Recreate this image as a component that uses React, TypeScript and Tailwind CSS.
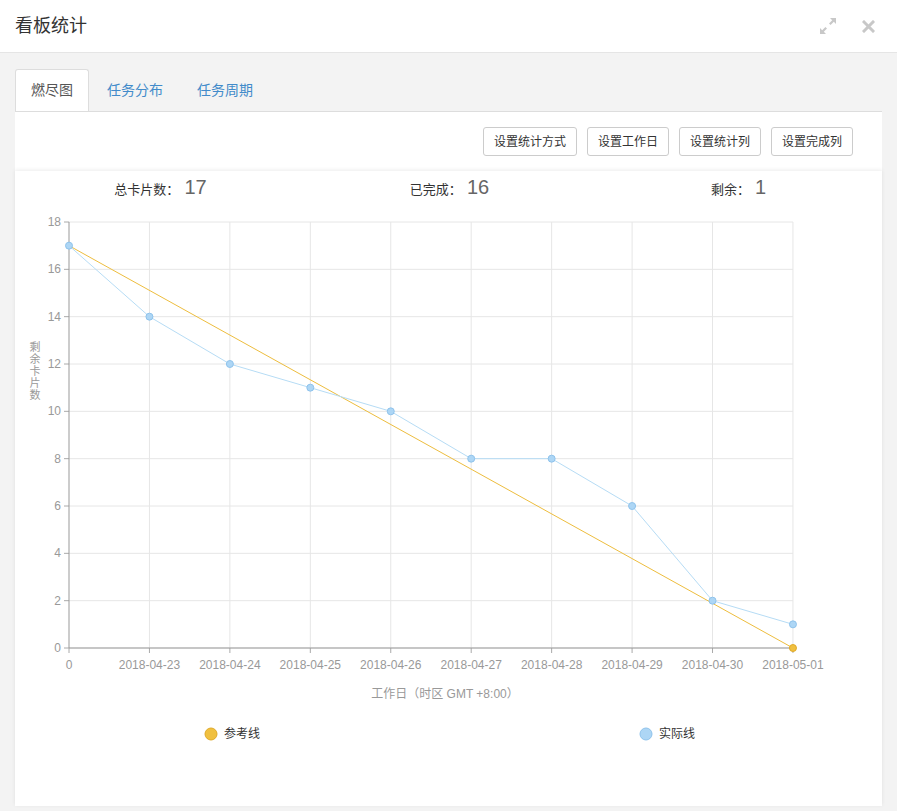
import React from 'react';

const actual = [17, 14, 12, 11, 10, 8, 8, 6, 2, 1];
const dates = ['0', '2018-04-23', '2018-04-24', '2018-04-25', '2018-04-26', '2018-04-27', '2018-04-28', '2018-04-29', '2018-04-30', '2018-05-01'];
const yTicks = [0, 2, 4, 6, 8, 10, 12, 14, 16, 18];

const X0 = 54;
const STEP = 80.44;
const Y0 = 19;

const px = (i: number) => X0 + i * STEP;
// one unit of value = 23.667px (two units per grid row of 47.33px)
const y = (v: number) => Y0 + (18 - v) * 23.667;

function BurnChart() {
  const right = px(9);
  const bottom = y(0);
  const actualPts = actual.map((v, i) => `${px(i)},${y(v)}`).join(' ');
  return (
    <svg width={868} height={603} className="block" style={{ fontFamily: '"Liberation Sans", "Noto Sans CJK SC", sans-serif' }}>
      {/* grid */}
      {yTicks.map((t) => (
        <g key={t}>
          <line x1={X0} x2={right} y1={y(t)} y2={y(t)} stroke="#e6e6e6" strokeWidth={1} />
          <line x1={X0 - 5} x2={X0} y1={y(t)} y2={y(t)} stroke="#aaa" strokeWidth={1} />
          <text x={X0 - 8} y={y(t) + 4} textAnchor="end" fontSize={12} fill="#999">{t}</text>
        </g>
      ))}
      {dates.map((d, i) => (
        <g key={d}>
          {i > 0 && <line x1={px(i)} x2={px(i)} y1={y(18)} y2={bottom} stroke="#e6e6e6" strokeWidth={1} />}
          <line x1={px(i)} x2={px(i)} y1={bottom} y2={bottom + 5} stroke="#aaa" strokeWidth={1} />
          <text x={px(i)} y={bottom + 21} textAnchor="middle" fontSize={12} fill="#999">{d}</text>
        </g>
      ))}
      {/* axes */}
      <line x1={X0} x2={X0} y1={y(18)} y2={bottom} stroke="#999" strokeWidth={1} />
      <line x1={X0} x2={right} y1={bottom} y2={bottom} stroke="#999" strokeWidth={1} />

      {/* reference line */}
      <line x1={px(0)} y1={y(17)} x2={px(9)} y2={y(0)} stroke="#edbd3e" strokeWidth={1} />
      <circle cx={px(9)} cy={y(0)} r={3.5} fill="#f0c040" stroke="#e0aa28" strokeWidth={1} />

      {/* actual line */}
      <polyline points={actualPts} fill="none" stroke="#b6dcf5" strokeWidth={1} />
      {actual.map((v, i) => (
        <circle key={i} cx={px(i)} cy={y(v)} r={3.5} fill="#add6f5" stroke="#8fc3ec" strokeWidth={1} />
      ))}

      {/* axis titles */}
      <text x={430} y={495} textAnchor="middle" fontSize={12} fill="#999">工作日（时区 GMT +8:00）</text>
      {['剩', '余', '卡', '片', '数'].map((c, i) => (
        <text key={c} x={20} y={148 + i * 12} textAnchor="middle" fontSize={11} fill="#999">{c}</text>
      ))}

      {/* legend */}
      <circle cx={196} cy={531} r={6} fill="#f0c040" stroke="#e0aa28" strokeWidth={1} />
      <text x={209} y={535} fontSize={12} fill="#333">参考线</text>
      <circle cx={631} cy={531} r={6} fill="#add6f5" stroke="#8fc3ec" strokeWidth={1} />
      <text x={644} y={535} fontSize={12} fill="#333">实际线</text>
    </svg>
  );
}

export default function App() {
  const font = { fontFamily: '"Liberation Sans", "Noto Sans CJK SC", sans-serif' };
  const stats = [
    { label: '总卡片数：', value: 17 },
    { label: '已完成：', value: 16 },
    { label: '剩余：', value: 1 },
  ];
  return (
    <div className="w-[897px] h-[811px] bg-[#f3f3f3] flex flex-col overflow-hidden" style={font}>
      {/* Header */}
      <div className="h-[53px] bg-white border-b border-[#e5e5e5] flex items-center justify-between pl-[15px] pr-[22px] shrink-0">
        <h1 className="text-[18px] text-[#333] leading-none">看板统计</h1>
        <div className="flex items-center gap-[26px]">
          <svg width="16" height="16" viewBox="0 0 16 16" fill="#c8c8c8">
            <path d="M10 0h6v6l-2.2-2.2-3.2 3.2-1.6-1.6 3.2-3.2z" />
            <path d="M6 16H0v-6l2.2 2.2 3.2-3.2 1.6 1.6-3.2 3.2z" />
          </svg>
          <svg width="13" height="13" viewBox="0 0 13 13">
            <path d="M2 2L11 11M11 2L2 11" stroke="#c8c8c8" strokeWidth="3" strokeLinecap="square" />
          </svg>
        </div>
      </div>

      {/* Body */}
      <div className="px-[15px] pt-[16px] flex flex-col flex-1">
        {/* Tabs */}
        <div className="flex h-[42px] items-end">
          <div className="h-[42px] w-[74px] bg-white border border-[#ddd] border-b-0 rounded-t-[3px] flex items-center justify-center text-[14px] text-[#555]">
            燃尽图
          </div>
          <div className="h-[42px] px-[18px] flex items-center text-[14px] text-[#428bca]">任务分布</div>
          <div className="h-[42px] px-[16px] flex items-center text-[14px] text-[#428bca]">任务周期</div>
        </div>

        {/* Panel */}
        <div className="bg-white border-t border-[#ddd]">
          <div className="flex justify-end gap-[10px] pt-[15px] pr-[29px] pb-[15px]">
            {['设置统计方式', '设置工作日', '设置统计列', '设置完成列'].map((b) => (
              <button key={b} className="h-[29px] px-[10px] border border-[#ccc] rounded-[3px] bg-white text-[12px] text-[#333]">
                {b}
              </button>
            ))}
          </div>

          {/* Chart card */}
          <div className="h-[635px] bg-white shadow-[0_-1px_4px_rgba(0,0,0,0.08)]">
            <div className="h-[32px] grid grid-cols-3 items-center">
              {stats.map((s) => (
                <div key={s.label} className="flex items-baseline justify-center pl-[2px] pt-[2px]">
                  <span className="text-[13px] text-[#333]">{s.label}</span>
                  <span className="ml-[5px] text-[20px] text-[#666] leading-none">{s.value}</span>
                </div>
              ))}
            </div>
            <BurnChart />
          </div>
        </div>
      </div>
    </div>
  );
}
